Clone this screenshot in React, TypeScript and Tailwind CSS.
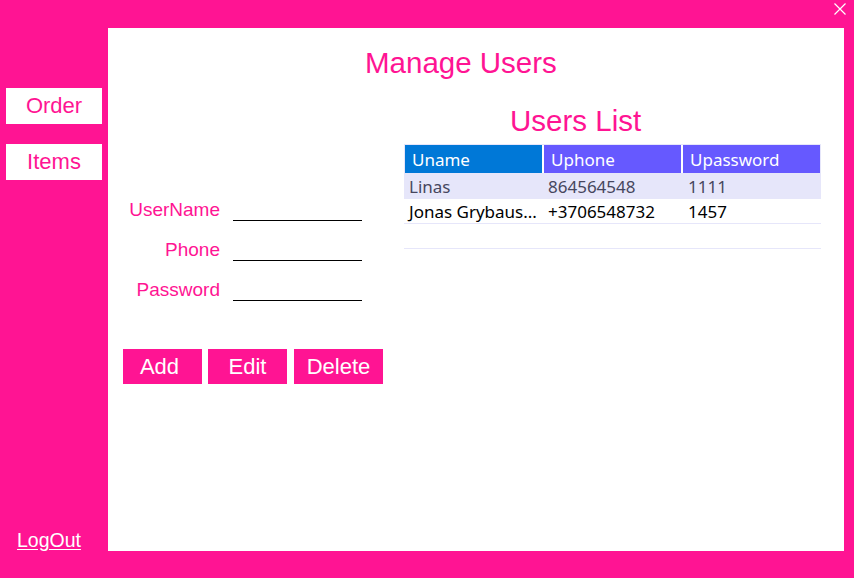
import React from "react";

/* Manage Users window: pink frame, left nav, white content panel */

type UserRow = {
  name: string;
  phone: string;
  password: string;
};

const users: UserRow[] = [
  { name: "Linas", phone: "864564548", password: "1111" },
  { name: "Jonas Grybaus...", phone: "+3706548732", password: "1457" },
];

const sans = "font-['Liberation_Sans',Arial,sans-serif]";
const tableFont = "font-['Noto_Sans','Open_Sans',sans-serif]";

function FormRow({ label }: { label: string }) {
  return (
    <div className="flex h-[22px] items-end">
      <span className="w-[112px] text-right text-[19px] leading-[22px] text-[#ff1493]">
        {label}
      </span>
      <div className="ml-[13px] h-[22px] w-[129px] border-b border-black" />
    </div>
  );
}

export default function App() {
  return (
    <div className={`flex h-[578px] w-[854px] flex-col bg-[#ff1493] ${sans}`}>
      {/* title bar */}
      <div className="flex h-[28px] justify-end pr-[8px] pt-[3px]">
        <svg width="12" height="12" viewBox="0 0 12 12">
          <path d="M0.5 0.5 L11.5 11.5 M11.5 0.5 L0.5 11.5" stroke="white" strokeWidth="1.2" />
        </svg>
      </div>

      <div className="flex h-[523px]">
        {/* left nav */}
        <div className="flex w-[108px] flex-col">
          <button className="ml-[6px] mt-[60px] h-[36px] w-[96px] bg-white text-[22px] leading-[36px] text-[#ff1493]">
            Order
          </button>
          <button className="ml-[6px] mt-[20px] h-[36px] w-[96px] bg-white text-[22px] leading-[36px] text-[#ff1493]">
            Items
          </button>
          <span className="ml-[17px] mt-auto text-[19.5px] leading-[22px] text-white underline underline-offset-2">
            LogOut
          </span>
        </div>

        {/* content panel */}
        <div className="flex w-[736px] flex-col bg-white">
          <h1 className="pl-[257px] pt-[18px] text-[29.5px] leading-[34px] text-[#ff1493]">
            Manage Users
          </h1>

          <div className="mt-[24px] flex">
            {/* form */}
            <div className="flex w-[296px] flex-col">
              <div className="flex flex-col gap-[18px] pt-[95px]">
                <FormRow label="UserName" />
                <FormRow label="Phone" />
                <FormRow label="Password" />
              </div>

              <div className="mt-[48px] flex pl-[15px]">
                <button className="h-[35px] w-[79px] bg-[#ff1493] pr-[6px] text-[22px] text-white">
                  Add
                </button>
                <button className="ml-[6px] h-[35px] w-[79px] bg-[#ff1493] text-[22px] text-white">
                  Edit
                </button>
                <button className="ml-[7px] h-[35px] w-[89px] bg-[#ff1493] text-[22px] text-white">
                  Delete
                </button>
              </div>
            </div>

            {/* users list */}
            <div className="flex w-[417px] flex-col">
              <h2 className="pl-[106px] text-[29.5px] leading-[34px] text-[#ff1493]">
                Users List
              </h2>

              <div className={`mt-[6px] ${tableFont} text-[17px]`}>
                <div className="flex h-[29px] border border-b-0 border-[#e6e6fa] text-white">
                  <div className="w-[137px] bg-[#0078d7] pl-[7px] leading-[30px]">Uname</div>
                  <div className="ml-[2px] w-[137px] bg-[#6659ff] pl-[7px] leading-[30px]">Uphone</div>
                  <div className="ml-[2px] flex-1 bg-[#6659ff] pl-[7px] leading-[30px]">Upassword</div>
                </div>

                {users.map((user, index) => (
                  <div
                    key={user.name}
                    className={
                      index === 0
                        ? "flex h-[26px] bg-[#e6e6fa] leading-[28px] text-[#46465e]"
                        : "flex h-[25px] border-b border-[#e6e6fa] leading-[26px] text-black"
                    }
                  >
                    <div className="w-[139px] pl-[5px]">{user.name}</div>
                    <div className="w-[140px] pl-[5px]">{user.phone}</div>
                    <div className="flex-1 pl-[5px]">{user.password}</div>
                  </div>
                ))}

                <div className="h-[25px] border-b border-[#e6e6fa]" />
              </div>
            </div>
          </div>
        </div>
      </div>
    </div>
  );
}
